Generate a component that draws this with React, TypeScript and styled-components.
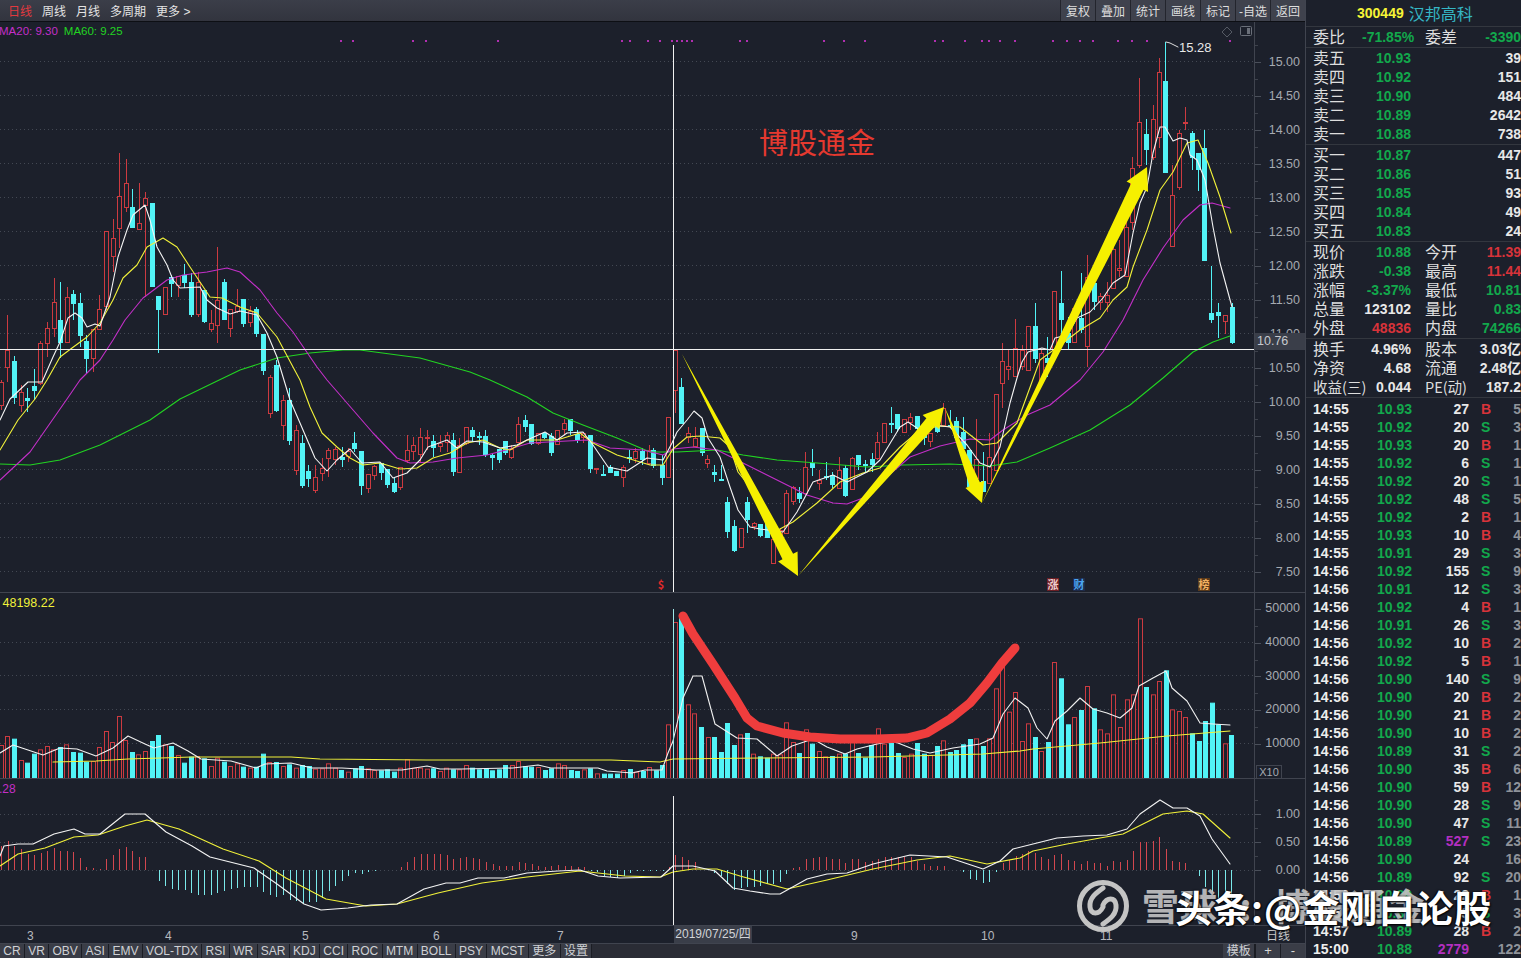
import React from 'react';
import styled, { createGlobalStyle } from 'styled-components';

const BG = '#1c202b';
const RED = '#cc3a40';
const CYAN = '#52f3f6';
const GREEN = '#12a84c';
const GRID = '#434853';

const GlobalStyle = createGlobalStyle`
  html, body {
    margin: 0;
    height: 100%;
    overflow: hidden;
    background: ${BG};
    font-family: "Liberation Sans", "Noto Sans CJK SC", sans-serif;
  }
`;

const Screen = styled.div`
  position: relative;
  width: 1521px;
  height: 958px;
  overflow: hidden;
  display: grid;
  grid-template-columns: 1305px 216px;
  background: ${BG};
`;

const Left = styled.div`
  display: flex;
  flex-direction: column;
  height: 958px;
`;

const Toolbar = styled.div`
  height: 21px;
  flex: none;
  display: flex;
  align-items: center;
  justify-content: space-between;
  padding-left: 3px;
  background: linear-gradient(#3b3e49, #32343e);
  border-bottom: 1px solid #0d0f14;
`;

const ToolGroup = styled.div`
  display: flex;
  height: 100%;
  align-items: center;
`;

const PeriodTab = styled.span<{ $active?: boolean }>`
  padding: 0 5px;
  font-size: 12px;
  white-space: nowrap;
  color: ${(p) => (p.$active ? '#e2393f' : '#e4e4e4')};
`;

const ToolButton = styled.span`
  display: flex;
  align-items: center;
  justify-content: center;
  box-sizing: border-box;
  height: 100%;
  width: 35px;
  font-size: 12px;
  white-space: nowrap;
  color: #dedede;
  border-left: 1px solid #23252d;
  background: #3f424d;
`;

const Pane = styled.div<{ $h: number }>`
  height: ${(p) => p.$h}px;
  flex: none;
  display: grid;
  grid-template-columns: 1254px 51px;
  border-bottom: 1px solid #40444f;
  box-sizing: border-box;
`;

const Plot = styled.div`
  position: relative;
  overflow: hidden;
`;

const ChartSvg = styled.svg`
  display: block;
`;

const Legend = styled.div`
  position: absolute;
  left: -1px;
  top: 3px;
  display: flex;
  gap: 6px;
  white-space: nowrap;
`;

const LegendItem = styled.span<{ $color: string; $size?: number }>`
  color: ${(p) => p.$color};
  font-size: ${(p) => p.$size || 11.5}px;
`;

const PlotTitle = styled.div`
  position: absolute;
  left: 759px;
  top: 100px;
  font-size: 29px;
  line-height: 38px;
  color: #e5392f;
  font-family: "Noto Sans CJK SC", sans-serif;
  white-space: nowrap;
`;

const Marker = styled.span<{ $x: number; $bg?: string; $color: string }>`
  position: absolute;
  left: ${(p) => p.$x}px;
  top: 556px;
  width: 12px;
  height: 13px;
  line-height: 13px;
  font-size: 11px;
  font-weight: 700;
  text-align: center;
  font-family: "Noto Sans CJK SC", sans-serif;
  color: ${(p) => p.$color};
  background: ${(p) => p.$bg || 'transparent'};
`;

const HighLabel = styled.span`
  position: absolute;
  left: 1179px;
  top: 18px;
  font-size: 13px;
  color: #e8e8e8;
`;

const Axis = styled.div<{ $top: number }>`
  position: relative;
  display: flex;
  flex-direction: column;
  margin-top: ${(p) => Math.min(p.$top, 0)}px;
  padding-top: ${(p) => Math.max(p.$top, 0)}px;
  border-left: 1px solid #40444f;
  overflow: hidden;
`;

const AxisLabel = styled.div<{ $row: number }>`
  position: relative;
  flex: none;
  height: ${(p) => p.$row}px;
  line-height: ${(p) => p.$row}px;
  text-align: right;
  padding-right: 5px;
  font-size: 12.5px;
  color: #a6aab1;
  &::before {
    content: '';
    position: absolute;
    left: 0;
    top: 50%;
    width: 6px;
    height: 1px;
    background: #4a4f5a;
  }
  &::after {
    content: '';
    position: absolute;
    left: 0;
    top: 0;
    width: 3px;
    height: 1px;
    background: #3d414b;
  }
`;

const PriceTag = styled.div`
  position: absolute;
  left: 0;
  top: 311px;
  width: 51px;
  height: 17px;
  line-height: 17px;
  padding-left: 2px;
  box-sizing: border-box;
  font-size: 12.5px;
  color: #c6c9ce;
  background: #3a3e49;
`;

const ScaleBox = styled.div`
  position: absolute;
  left: 1px;
  top: 173px;
  width: 24px;
  height: 12px;
  line-height: 12px;
  border: 1px solid #40444f;
  font-size: 11px;
  text-align: center;
  color: #a6aab1;
`;

const DateAxis = styled.div`
  position: relative;
  height: 18px;
  flex: none;
  background: ${BG};
  border-bottom: 1px solid #40444f;
  box-sizing: border-box;
`;

const DateTick = styled.span<{ $x: number }>`
  position: absolute;
  left: ${(p) => p.$x}px;
  top: 3px;
  font-size: 12px;
  color: #b6b9bf;
`;

const DateCursor = styled.span`
  position: absolute;
  left: 674px;
  top: 0;
  width: 78px;
  height: 17px;
  line-height: 17px;
  text-align: center;
  font-size: 12px;
  color: #d2d4d8;
  background: #3a3e49;
`;

const AxisTitle = styled.span`
  position: absolute;
  left: 1266px;
  top: 1px;
  font-size: 12px;
  line-height: 15px;
  font-family: "Noto Sans CJK SC", sans-serif;
  color: #c8c8c8;
`;

const TabBar = styled.div`
  flex: 1;
  display: flex;
  align-items: stretch;
  justify-content: space-between;
  background: #2a2c35;
`;

const TabGroup = styled.div`
  display: flex;
`;

const IndicatorTab = styled.span`
  display: flex;
  align-items: center;
  padding: 0 3.3px;
  font-size: 12px;
  line-height: 14px;
  white-space: nowrap;
  color: #cfd1d5;
  background: #3a3d47;
  border-right: 1px solid #1b1d24;
`;

const StepButton = styled.span`
  display: flex;
  align-items: center;
  justify-content: center;
  width: 24px;
  font-size: 13px;
  line-height: 14px;
  color: #d8d8d8;
  background: #3a3d47;
  border-left: 1px solid #1b1d24;
`;

const Side = styled.div`
  border-left: 1px solid #40444f;
  overflow: hidden;
  font-weight: 700;
  font-size: 14px;
`;

const StockHeader = styled.div`
  height: 27px;
  display: flex;
  align-items: center;
  gap: 5px;
  padding-left: 51px;
  border-bottom: 1px solid #33373f;
  box-sizing: border-box;
`;

const StockCode = styled.span`
  color: #f6f436;
  font-size: 14px;
`;

const StockName = styled.span`
  color: #35b6c4;
  font-size: 16px;
  font-weight: 400;
  font-family: "Noto Sans CJK SC", sans-serif;
`;

const Section = styled.div`
  padding-top: 1px;
  border-bottom: 1px solid #33373f;
`;

const StatRow = styled.div`
  height: 19px;
  line-height: 19px;
  display: grid;
  grid-template-columns: 49px 49px 14px 40px 56px;
  padding-left: 7px;
  white-space: nowrap;
`;

const BookRow = styled.div`
  height: 19px;
  line-height: 19px;
  display: grid;
  grid-template-columns: 49px 49px 1fr;
  padding-left: 7px;
`;

const Label = styled.span<{ $tight?: boolean }>`
  display: block;
  margin-top: -1px;
  font-size: ${(p) => (p.$tight ? 14.5 : 16)}px;
  font-weight: 400;
  color: #dedede;
  white-space: nowrap;
  font-family: "Noto Sans CJK SC", sans-serif;
`;

const Num = styled.span<{ $color?: string }>`
  text-align: right;
  white-space: nowrap;
  color: ${(p) => p.$color || '#e8e8e8'};
`;

const SecondLabel = styled(Label)`
  grid-column: 4;
`;

const TickList = styled.div`
  padding-top: 2px;
`;

const TickRow = styled.div`
  height: 18px;
  line-height: 18px;
  display: grid;
  grid-template-columns: 49px 50px 57px 12px 9px 1fr;
  padding-left: 7px;
  white-space: nowrap;
  color: #eeeeee;
`;

const TradeSide = styled.span<{ $buy: boolean }>`
  text-align: center;
  color: ${(p) => (p.$buy ? '#d8333a' : GREEN)};
`;

const Mark = styled.div`
  position: absolute;
  left: 1076px;
  top: 879px;
  width: 56px;
  height: 56px;
`;

const GrayWater = styled.div`
  position: absolute;
  left: 1142px;
  top: 880px;
  font-size: 37px;
  line-height: 50px;
  letter-spacing: 1px;
  word-spacing: 12px;
  color: #c4c4c4;
  opacity: 0.9;
  white-space: nowrap;
  font-family: "Noto Sans CJK SC", sans-serif;
  font-weight: 700;
`;

const WhiteWater = styled.div`
  position: absolute;
  left: 1175px;
  top: 882px;
  font-size: 37px;
  line-height: 50px;
  letter-spacing: 1px;
  color: #ffffff;
  white-space: nowrap;
  font-family: "Noto Sans CJK SC", sans-serif;
  font-weight: 700;
  text-shadow: 1px 1px 2px #000, -1px 0 2px #000;
`;

type Candle = [number, 'r' | 'c', number, number, number, number];

const candles: Candle[] = [
  [1, 'r', 382, 405, 380, 410], [7, 'r', 350, 367, 315, 382], [14, 'c', 361, 397, 356, 404], [21, 'r', 392, 405, 385, 412],
  [27, 'c', 398, 400, 388, 412], [34, 'c', 386, 390, 369, 400], [40, 'r', 343, 383, 341, 385], [47, 'r', 328, 343, 322, 357],
  [54, 'r', 302, 328, 278, 337], [60, 'c', 320, 342, 282, 358], [67, 'r', 297, 342, 287, 342], [73, 'c', 294, 303, 290, 320],
  [80, 'c', 303, 335, 293, 347], [86, 'c', 341, 358, 335, 373], [93, 'r', 329, 358, 329, 372], [99, 'r', 309, 329, 295, 330],
  [106, 'r', 231, 306, 231, 310], [113, 'r', 238, 256, 219, 272], [119, 'r', 196, 228, 153, 248], [126, 'r', 183, 207, 159, 212],
  [132, 'c', 207, 227, 189, 227], [139, 'r', 223, 229, 183, 229], [145, 'r', 198, 205, 192, 297], [152, 'c', 203, 286, 203, 286],
  [158, 'c', 296, 309, 296, 353], [165, 'r', 287, 314, 287, 314], [171, 'c', 277, 283, 275, 297], [178, 'r', 276, 285, 276, 297],
  [184, 'c', 275, 282, 264, 288], [191, 'c', 282, 314, 273, 317], [198, 'r', 282, 314, 272, 317], [204, 'c', 290, 321, 290, 323],
  [211, 'r', 323, 329, 310, 332], [217, 'r', 300, 325, 247, 343], [224, 'c', 282, 319, 279, 320], [230, 'r', 309, 328, 309, 337],
  [237, 'r', 306, 311, 289, 313], [243, 'c', 299, 323, 299, 327], [250, 'r', 311, 322, 306, 327], [256, 'c', 309, 333, 307, 337],
  [263, 'c', 334, 370, 334, 375], [270, 'r', 377, 413, 375, 418], [276, 'c', 365, 410, 360, 412], [283, 'r', 400, 425, 395, 440],
  [289, 'c', 400, 440, 388, 445], [296, 'r', 430, 470, 425, 475],
  [302, 'c', 443, 485, 435, 488], [308, 'c', 471, 478, 465, 487], [315, 'r', 477, 490, 465, 493], [322, 'r', 468, 473, 458, 481],
  [328, 'r', 450, 458, 448, 477], [335, 'r', 449, 459, 447, 465], [342, 'c', 457, 459, 447, 467], [348, 'r', 451, 456, 448, 462],
  [354, 'c', 443, 448, 432, 452], [361, 'c', 451, 485, 451, 495], [368, 'r', 474, 488, 474, 493], [374, 'r', 466, 475, 465, 480],
  [381, 'c', 463, 472, 463, 480], [387, 'c', 469, 484, 469, 488], [394, 'c', 483, 491, 478, 493], [400, 'r', 467, 487, 467, 490],
  [407, 'r', 450, 460, 435, 463], [413, 'r', 445, 451, 437, 460], [420, 'r', 437, 454, 428, 463], [427, 'r', 437, 438, 430, 450],
  [433, 'c', 441, 447, 435, 457], [440, 'r', 443, 446, 435, 452], [447, 'r', 435, 442, 432, 452], [453, 'c', 440, 471, 433, 476],
  [459, 'r', 445, 472, 438, 472], [466, 'r', 427, 443, 427, 445], [472, 'c', 430, 436, 427, 442], [479, 'c', 436, 437, 432, 445],
  [485, 'c', 436, 454, 430, 457], [492, 'c', 455, 457, 453, 470], [499, 'c', 449, 459, 449, 463], [505, 'c', 441, 452, 441, 455],
  [511, 'r', 449, 457, 445, 459], [518, 'r', 424, 442, 417, 443], [525, 'c', 420, 426, 415, 432], [531, 'c', 424, 443, 424, 445],
  [538, 'r', 433, 443, 433, 445], [544, 'c', 433, 437, 432, 439], [551, 'c', 436, 452, 433, 456], [557, 'r', 430, 444, 430, 445],
  [564, 'r', 423, 429, 419, 435], [570, 'c', 419, 430, 419, 435], [577, 'c', 434, 439, 430, 443], [583, 'r', 433, 437, 432, 443],
  [590, 'c', 435, 468, 435, 473], [596, 'r', 468, 469, 468, 474], [603, 'c', 474, 475, 465, 476], [610, 'c', 467, 472, 465, 473],
  [616, 'c', 471, 475, 471, 476], [623, 'r', 467, 477, 465, 487], [629, 'c', 457, 458, 450, 463], [635, 'r', 451, 458, 448, 463],
  [642, 'c', 451, 459, 448, 465], [649, 'r', 450, 463, 445, 465], [653, 'c', 450, 465, 448, 468], [662, 'c', 465, 477, 455, 485],
  [668, 'r', 417, 477, 417, 478], [675, 'r', 350, 390, 350, 413], [681, 'c', 387, 423, 378, 423], [688, 'r', 433, 437, 427, 443],
  [695, 'r', 438, 446, 427, 447], [702, 'c', 428, 452, 428, 456], [707, 'r', 459, 463, 455, 468], [714, 'c', 472, 474, 465, 482],
  [721, 'c', 479, 480, 465, 481], [727, 'c', 502, 531, 497, 538], [734, 'c', 526, 550, 520, 552], [741, 'r', 528, 547, 528, 548],
  [747, 'c', 502, 519, 497, 533], [754, 'r', 523, 526, 522, 530], [760, 'c', 524, 535, 524, 537], [767, 'c', 522, 537, 522, 538],
  [773, 'r', 539, 563, 539, 564], [780, 'r', 530, 540, 528, 542], [786, 'r', 493, 533, 490, 533], [793, 'r', 487, 501, 486, 505],
  [799, 'c', 493, 498, 487, 503], [805, 'r', 467, 493, 452, 493], [812, 'c', 463, 467, 449, 476], [819, 'r', 480, 483, 470, 490],
  [826, 'c', 476, 477, 462, 480], [832, 'c', 475, 484, 472, 488], [839, 'r', 470, 488, 457, 488], [845, 'c', 468, 495, 465, 497],
  [852, 'r', 458, 489, 457, 490], [858, 'c', 455, 464, 455, 470], [865, 'c', 464, 465, 460, 472], [872, 'c', 459, 464, 453, 472],
  [877, 'r', 442, 458, 432, 460], [884, 'r', 423, 442, 423, 443], [891, 'c', 423, 424, 407, 433], [897, 'c', 414, 428, 414, 432],
  [904, 'r', 419, 432, 419, 433], [910, 'r', 417, 422, 413, 430], [917, 'c', 416, 428, 416, 433], [924, 'c', 428, 437, 428, 445],
  [930, 'r', 433, 441, 433, 447], [937, 'c', 425, 431, 420, 433], [943, 'r', 408, 425, 403, 426], [950, 'c', 425, 426, 410, 427],
  [956, 'c', 421, 437, 417, 443], [963, 'c', 432, 448, 417, 450], [969, 'c', 450, 486, 450, 486], [976, 'r', 459, 478, 419, 478],
  [983, 'c', 481, 491, 452, 491], [989, 'r', 457, 483, 433, 483], [996, 'r', 394, 470, 394, 471], [1002, 'r', 361, 383, 343, 408],
  [1008, 'r', 366, 369, 350, 380], [1015, 'r', 348, 376, 319, 377], [1022, 'r', 350, 366, 345, 370], [1028, 'r', 326, 370, 326, 370],
  [1035, 'c', 326, 358, 303, 363], [1041, 'r', 353, 380, 350, 384], [1047, 'c', 358, 362, 337, 377], [1054, 'r', 291, 350, 291, 352],
  [1061, 'c', 303, 319, 271, 340], [1068, 'c', 333, 342, 317, 350], [1074, 'r', 308, 342, 308, 343], [1081, 'c', 318, 329, 273, 333],
  [1087, 'r', 277, 346, 255, 367], [1094, 'c', 283, 301, 283, 310], [1100, 'r', 296, 302, 293, 310], [1107, 'r', 295, 302, 282, 312],
  [1113, 'r', 249, 288, 233, 288], [1119, 'r', 268, 270, 240, 277], [1126, 'r', 227, 276, 207, 277], [1132, 'r', 168, 222, 157, 230],
  [1139, 'r', 122, 165, 78, 168], [1146, 'c', 134, 149, 119, 165], [1153, 'r', 119, 157, 105, 160], [1159, 'r', 72, 137, 58, 148],
  [1165, 'c', 81, 172, 42, 172], [1172, 'r', 195, 246, 165, 247], [1179, 'r', 133, 187, 130, 190], [1185, 'r', 122, 123, 107, 130],
  [1192, 'c', 133, 157, 131, 170], [1198, 'c', 153, 169, 153, 191], [1204, 'c', 148, 260, 130, 260], [1211, 'c', 313, 319, 266, 323],
  [1218, 'c', 312, 315, 303, 338], [1225, 'r', 315, 321, 315, 334], [1232, 'c', 307, 342, 303, 344],
];

const ma5 = '0,420 10,399 28,382 42,382 53,357 60,342 68,318 75,313 82,318 87,327 95,324 100,326 110,297 118,257 127,230 133,215 145,205 150,220 157,247 167,265 173,280 180,288 200,287 207,300 217,308 230,314 240,311 257,315 267,333 277,357 290,400 300,423 315,458 327,471 337,460 350,449 362,463 380,462 393,478 407,473 420,460 428,447 447,440 457,448 467,441 483,442 500,448 517,445 527,440 545,432 557,440 567,433 583,432 593,445 608,467 627,471 647,458 663,460 672,443 677,432 687,420 694,411 702,418 708,438 720,457 730,487 738,510 750,527 760,529 783,532 797,512 813,482 833,475 847,482 867,472 880,460 900,427 908,422 920,430 933,425 950,427 967,445 980,463 990,467 1000,447 1010,403 1017,378 1022,362 1028,352 1042,348 1050,350 1055,338 1067,335 1077,318 1090,312 1103,298 1113,283 1125,275 1133,233 1140,203 1147,187 1153,153 1160,127 1165,127 1173,141 1180,138 1187,140 1190,155 1197,160 1205,180 1213,227 1220,263 1232,307';
const ma10 = '0,450 18,420 35,399 47,380 60,357 72,348 87,337 100,323 113,300 123,278 137,265 147,247 163,238 177,247 190,267 210,297 222,298 240,307 257,313 277,337 293,367 300,380 310,407 322,433 337,447 350,458 363,465 380,463 400,469 417,468 433,458 450,453 467,443 483,440 500,448 510,450 527,440 557,440 580,433 593,443 617,455 650,465 663,465 673,449 687,437 700,436 720,438 730,447 738,472 750,487 767,517 778,530 793,522 817,503 840,482 863,473 880,468 900,447 920,430 940,426 960,427 983,445 997,443 1017,423 1040,360 1063,343 1080,330 1100,318 1113,300 1127,287 1133,267 1147,230 1160,190 1173,172 1187,143 1198,140 1208,163 1220,197 1231,233';
const ma20 = '0,480 30,452 67,399 80,380 100,360 113,340 125,320 143,298 167,280 183,275 207,272 227,268 240,272 260,290 277,313 293,332 317,367 327,380 347,403 373,433 397,458 410,463 433,462 457,458 487,455 513,448 530,443 567,441 587,440 610,448 643,450 663,455 673,449 693,447 717,450 737,460 763,473 783,483 807,495 833,503 847,504 863,498 883,480 910,457 940,446 970,439 990,440 1003,430 1027,415 1050,405 1080,380 1103,352 1123,320 1143,280 1163,248 1183,220 1200,205 1212,203 1230,208';
const ma60 = '0,464 30,465 60,460 100,445 150,420 180,399 213,383 240,370 277,358 310,353 343,350 360,350 420,358 470,372 490,380 527,397 553,413 583,425 617,438 650,452 677,452 717,450 743,455 777,460 817,463 867,467 903,465 950,464 990,466 1017,462 1050,448 1090,430 1130,405 1163,378 1193,352 1213,342 1230,336';

const volWhite = '0,752 13,744 43,754 60,747 77,748 96,755 113,747 128,735 145,743 154,747 173,742 188,750 201,758 231,760 256,767 265,763 291,762 312,767 342,767 376,769 402,769 427,765 440,768 462,768 513,767 538,764 551,767 598,767 607,770 632,772 645,769 662,769 668,752 673,740 683,697 693,675 702,675 715,723 737,737 757,738 777,755 792,745 813,738 827,746 845,753 857,748 877,743 893,740 913,748 930,752 953,747 980,743 993,737 1003,713 1015,697 1028,707 1037,727 1047,738 1055,720 1067,710 1080,697 1093,708 1107,712 1120,717 1132,707 1139,685 1153,677 1166,670 1172,687 1187,700 1200,722 1213,723 1230,724';
const volYellow = '53,761 96,760 128,758 192,756 291,756 320,758 427,759 611,759 660,761 673,758 760,757 873,756 983,753 1020,750 1033,748 1100,742 1167,735 1230,730';
const macdWhite = '0,855 4,845 18,843 33,843 54,833 74,828 85,833 100,833 125,813 145,813 166,831 192,845 210,856 254,867 277,883 304,903 321,909 348,907 371,904 397,903 424,888 446,882 460,882 478,877 504,877 527,872 558,870 580,869 598,875 620,877 661,876 673,865 693,865 715,870 733,887 750,890 770,893 780,893 807,878 827,873 847,872 873,863 910,854 947,856 983,868 1000,860 1013,848 1037,842 1057,837 1083,835 1107,834 1127,828 1140,813 1160,799 1173,807 1187,807 1200,815 1212,838 1230,863';
const macdYellow = '0,865 18,853 45,847 74,836 98,834 125,825 147,819 179,828 223,848 259,860 286,877 326,898 366,905 397,903 438,892 482,882 527,876 580,870 625,875 660,876 673,871 693,868 717,868 740,875 787,888 827,879 873,868 917,859 950,855 987,863 1020,857 1033,850 1067,843 1100,837 1123,833 1143,823 1163,813 1187,810 1203,813 1230,837';
const redCurve = '683,615 693,633 713,663 735,697 747,717 757,725 783,732 810,736 840,738 877,738 907,737 927,732 950,718 970,702 987,682 1002,662 1015,647';

// volume tops were read off as crop offsets, kind + offset
const volLeft = 'r462 r435 c443 r507 c515 c488 r475 r465 r475 c468 r460 c483 c485 c512 r510 r468 r420 r453 r375 r447 c483 r490 r480 c450 c432 r460 c465 r492 c515 c497 r495 c502 r525 r500 c512 r525 r517 c527 r530 c527 c488 r513 c513 r525 c520 r530 c522 c525 r533 r532 r517 r530 c537 r542 c532 c525 r532 r537 c538 c535 c542 r530 r505 r530 r530 r533 c532 r540 r530 c535 r535 r522 c530 c535 c532 c538 c535 c522 r522 r510 c525 c527 r528 c537 c532 r517 r522 c537 c540 r535 c532 r547 c548 c548 c548 r537 c534 r542 c540 r528 c538';
const volMid = 'c492 r370 r63 c50 r310 r337 c378 r408 c408 c453 c366 c432 r400 c396 r458 c466 c470 r458 r460 r364 r423 c456 r385 c428 r450 r466 c465 r458 c458 r412 c456 c470 c432 r382 r428 c426 c456 r468 r458 c426 c458 r462 c435 r418 c453 c447 c430 c414 r412 c435 r412 r262 r195 r332 r273';
const volRight = 'r420 r367 c408 r450 c423 r183 c232 c370 r348 c327 r255 c322 r385 r397 r280 r378 r295 r280 r52 c258 r280 r240 c208 r325 r330 r348 c397 c420 c360 c305 c370 r427 c402';

const parseBars = (src: string, x0: number, y0: number) =>
  src.split(' ').map((s, i) => ({
    x: x0 + i * 6.55,
    up: s[0] === 'r',
    top: y0 + Number(s.slice(1)) / 3,
  }));

const volumeBars = [
  ...parseBars(volLeft, 0.9, 590),
  ...parseBars(volMid, 661.7, 600),
  ...parseBars(volRight, 1021.7, 600),
];

const macdSegments: [number, number[]][] = [
  [1.3, [24, 29, 24, 21, 16, 15, 17, 19, 22, 19, 19, 18, 12, 3, 2, 1, 11, 15, 21, 23, 19, 13, 13, 0, -11, -16, -19, -20, -20, -23, -25, -25, -25, -23, -21, -19, -18, -17, -17, -17, -22, -25, -27, -25, -30, -31, -34, -32, -32, -28, -21, -16, -11, -6, -3, -4, -2, -1, 0, 0, 0, 3, 8, 13, 16, 16, 16, 16, 15, 11, 12, 13, 12, 11, 8, 6, 4, 4, 4, 8, 7, 6, 4, 3, 4, 5, 4, 4, 3, 3, -1, -2, -6, -7, -8, -6, -3, -1, -1, -1, -1, -1, 3]],
  [675, [15, 13, 10, 8, 0, 0, -3, -6, -14, -20, -18, -17, -17, -16, -14, -14, -12, -4, 2, 3, 11, 12, 13, 13, 11, 11, 7, 11, 11, 8, 9, 11, 13, 13, 13, 13, 13, 9, 6, 4, 4, 4, 0, 0, -2, -9, -10, -13, -12, -2, 7, 10, 14]],
  [1021.7, [16, 19, 17, 13, 11, 15, 16, 10, 9, 6, 9, 7, 7, 4, 9, 8, 10, 19, 28, 28, 29, 33, 21, 9, 8, 7, 0, -6, -17, -22, -30, -30, -30]],
];

const signalDots = [341, 353, 413, 426, 498, 622, 630, 648, 660, 672, 677, 682, 687, 692, 740, 747, 824, 844, 865, 935, 943, 965, 982, 989, 1000, 1015, 1053, 1067, 1080, 1093, 1118, 1132, 1147, 1230];

const priceLabels = ['15.00', '14.50', '14.00', '13.50', '13.00', '12.50', '12.00', '11.50', '11.00', '10.50', '10.00', '9.50', '9.00', '8.50', '8.00', '7.50'];
const volLabels = ['50000', '40000', '30000', '20000', '10000'];
const macdLabels = ['1.00', '0.50', '0.00'];
const dateTicks: [number, string][] = [[27, '3'], [165, '4'], [302, '5'], [433, '6'], [557, '7'], [851, '9'], [981, '10'], [1100, '11']];
const indicators = ['CR', 'VR', 'OBV', 'ASI', 'EMV', 'VOL-TDX', 'RSI', 'WR', 'SAR', 'KDJ', 'CCI', 'ROC', 'MTM', 'BOLL', 'PSY', 'MCST', '更多', '设置'];

const bookAsk = [['卖五', '10.93', '39'], ['卖四', '10.92', '151'], ['卖三', '10.90', '484'], ['卖二', '10.89', '2642'], ['卖一', '10.88', '738']];
const bookBid = [['买一', '10.87', '447'], ['买二', '10.86', '51'], ['买三', '10.85', '93'], ['买四', '10.84', '49'], ['买五', '10.83', '24']];

const ticks: [string, string, string, string, string][] = [
  ['14:55', '10.93', '27', 'B', '5'], ['14:55', '10.92', '20', 'S', '3'], ['14:55', '10.93', '20', 'B', '1'], ['14:55', '10.92', '6', 'S', '1'],
  ['14:55', '10.92', '20', 'S', '1'], ['14:55', '10.92', '48', 'S', '5'], ['14:55', '10.92', '2', 'B', '1'], ['14:55', '10.93', '10', 'B', '4'],
  ['14:55', '10.91', '29', 'S', '3'], ['14:56', '10.92', '155', 'S', '9'], ['14:56', '10.91', '12', 'S', '3'], ['14:56', '10.92', '4', 'B', '1'],
  ['14:56', '10.91', '26', 'S', '3'], ['14:56', '10.92', '10', 'B', '2'], ['14:56', '10.92', '5', 'B', '1'], ['14:56', '10.90', '140', 'S', '9'],
  ['14:56', '10.90', '20', 'B', '2'], ['14:56', '10.90', '21', 'B', '2'], ['14:56', '10.90', '10', 'B', '2'], ['14:56', '10.89', '31', 'S', '2'],
  ['14:56', '10.90', '35', 'B', '6'], ['14:56', '10.90', '59', 'B', '12'], ['14:56', '10.90', '28', 'S', '9'], ['14:56', '10.90', '47', 'S', '11'],
  ['14:56', '10.89', '527', 'S', '23'], ['14:56', '10.90', '24', '', '16'], ['14:56', '10.89', '92', 'S', '20'], ['14:56', '10.89', '22', 'B', '1'],
  ['14:57', '10.88', '8', 'S', '3'], ['14:57', '10.89', '28', 'B', '2'], ['15:00', '10.88', '2779', '', '122'],
];

const arrowPoints = (tail: number[], tip: number[], body: number, head: number, len: number) => {
  const dx = tip[0] - tail[0];
  const dy = tip[1] - tail[1];
  const d = Math.hypot(dx, dy);
  const [ux, uy] = [dx / d, dy / d];
  const bx = tip[0] - ux * len;
  const by = tip[1] - uy * len;
  const at = (w: number) => [`${bx - uy * w},${by + ux * w}`, `${bx + uy * w},${by - ux * w}`];
  const [b1, b2] = at(body / 2);
  const [h1, h2] = at(head / 2);
  return `${tail[0]},${tail[1]} ${b1} ${h1} ${tip[0]},${tip[1]} ${h2} ${b2}`;
};

const arrows = [
  arrowPoints([682, 354], [798, 576], 12, 22, 22),
  arrowPoints([798, 576], [944, 407], 12, 22, 20),
  arrowPoints([945, 408], [982, 503], 11, 20, 20),
  arrowPoints([982, 503], [1147, 167], 14, 24, 22),
];

const Line = ({ points, color, width = 1.1 }: { points: string; color: string; width?: number }) => (
  <polyline points={points} fill="none" stroke={color} strokeWidth={width} strokeLinejoin="round" strokeLinecap="round" />
);

const Grid = ({ rows }: { rows: number[] }) => (
  <>
    {rows.map((y) => (
      <line key={y} x1={0} x2={1254} y1={y + 0.5} y2={y + 0.5} stroke={GRID} strokeDasharray="1 3" />
    ))}
  </>
);

const PriceChart = () => (
  <ChartSvg width={1254} height={570} viewBox="0 22 1254 570">
    <Grid rows={priceLabels.map((_, i) => 61 + i * 34)} />
    {signalDots.map((x) => (
      <rect key={x} x={x - 1} y={40} width={2} height={2} fill="#b02fb0" />
    ))}
    {candles.map(([x, kind, top, bot, wt, wb]) => {
      const cx = Math.round(x);
      const color = kind === 'r' ? RED : CYAN;
      return (
        <g key={x}>
          <line x1={cx + 0.5} x2={cx + 0.5} y1={wt} y2={wb} stroke={color} />
          <rect
            x={cx - 1.5}
            y={top + 0.5}
            width={4}
            height={Math.max(bot - top, 1)}
            fill={kind === 'r' ? BG : CYAN}
            stroke={color}
          />
        </g>
      );
    })}
    <Line points={ma60} color="#22d422" />
    <Line points={ma20} color="#c32fc8" />
    <Line points={ma10} color="#f2f23a" />
    <Line points={ma5} color="#f4f4f4" />
    <Line points="1166,42 1170,43 1178,47" color="#dddddd" width={1} />
    <line x1={673.5} x2={673.5} y1={45} y2={592} stroke="#f0f0f0" />
    <line x1={0} x2={1254} y1={349.5} y2={349.5} stroke="#f0f0f0" />
    {arrows.map((p) => (
      <polygon key={p} points={p} fill="#f6f000" />
    ))}
    <polygon points="1227,27 1232,32 1227,37 1222,32" fill="none" stroke="#555a64" />
    <rect x={1240.5} y={26.5} width={11} height={9} rx={1} fill="none" stroke="#6a6f79" />
    <rect x={1247} y={28} width={3} height={6} fill="#6a6f79" />
  </ChartSvg>
);

const VolumeChart = () => (
  <ChartSvg width={1254} height={185} viewBox="0 592 1254 185">
    <Grid rows={[641, 674, 708, 742]} />
    {volumeBars.map((b) => {
      const cx = Math.round(b.x);
      const color = b.up ? RED : CYAN;
      return (
        <rect
          key={b.x}
          x={cx - 1.5}
          y={b.top + 0.5}
          width={4}
          height={777 - b.top}
          fill={b.up ? BG : CYAN}
          stroke={color}
        />
      );
    })}
    <Line points={volYellow} color="#f2f23a" />
    <Line points={volWhite} color="#f0f0f0" />
    <line x1={673.5} x2={673.5} y1={608} y2={777} stroke="#9fe8e8" />
    <Line points={redCurve} color="#ef3d3d" width={9} />
  </ChartSvg>
);

const MacdChart = () => (
  <ChartSvg width={1254} height={146} viewBox="0 778 1254 146">
    <Grid rows={[813, 841, 869]} />
    {macdSegments.flatMap(([x0, hs]) =>
      hs.map((h, i) => {
        const cx = Math.round(x0 + i * 6.55) + 0.5;
        return (
          <line
            key={`${x0}-${i}`}
            x1={cx}
            x2={cx}
            y1={869}
            y2={869 - h}
            stroke={h > 0 ? '#d2474f' : '#7ae9ea'}
          />
        );
      }),
    )}
    <Line points={macdYellow} color="#f2f23a" />
    <Line points={macdWhite} color="#f4f4f4" />
    <line x1={673.5} x2={673.5} y1={795} y2={924} stroke="#f0f0f0" />
  </ChartSvg>
);

const App: React.FC = () => (
  <Screen>
    <GlobalStyle />
    <Left>
      <Toolbar>
        <ToolGroup>
          <PeriodTab $active>日线</PeriodTab>
          <PeriodTab>周线</PeriodTab>
          <PeriodTab>月线</PeriodTab>
          <PeriodTab>多周期</PeriodTab>
          <PeriodTab>更多 &gt;</PeriodTab>
        </ToolGroup>
        <ToolGroup>
          {['复权', '叠加', '统计', '画线', '标记', '-自选', '返回'].map((t) => (
            <ToolButton key={t}>{t}</ToolButton>
          ))}
        </ToolGroup>
      </Toolbar>

      <Pane $h={571}>
        <Plot>
          <PriceChart />
          <Legend>
            <LegendItem $color="#c32fc8">MA20: 9.30</LegendItem>
            <LegendItem $color="#22d422">MA60: 9.25</LegendItem>
          </Legend>
          <PlotTitle>博股通金</PlotTitle>
          <HighLabel>15.28</HighLabel>
          <Marker $x={655} $color="#e02a2a">$</Marker>
          <Marker $x={1047} $bg="#6b1f25" $color="#f2d0d0">涨</Marker>
          <Marker $x={1073} $bg="#1d2a4a" $color="#4aa4f0">财</Marker>
          <Marker $x={1198} $bg="#5a3a1a" $color="#f0b060">榜</Marker>
        </Plot>
        <Axis $top={23}>
          {priceLabels.map((l) => (
            <AxisLabel key={l} $row={34}>{l}</AxisLabel>
          ))}
          <PriceTag>10.76</PriceTag>
        </Axis>
      </Pane>

      <Pane $h={186}>
        <Plot>
          <VolumeChart />
          <Legend>
            <LegendItem $color="#f2f23a" $size={12.5}>&nbsp;48198.22</LegendItem>
          </Legend>
        </Plot>
        <Axis $top={-1}>
          {volLabels.map((l) => (
            <AxisLabel key={l} $row={33.75}>{l}</AxisLabel>
          ))}
          <ScaleBox>X10</ScaleBox>
        </Axis>
      </Pane>

      <Pane $h={147}>
        <Plot>
          <MacdChart />
          <Legend>
            <LegendItem $color="#c32fc8" $size={12}>.28</LegendItem>
          </Legend>
        </Plot>
        <Axis $top={21}>
          {macdLabels.map((l) => (
            <AxisLabel key={l} $row={28}>{l}</AxisLabel>
          ))}
        </Axis>
      </Pane>

      <DateAxis>
        {dateTicks.map(([x, t]) => (
          <DateTick key={t} $x={x}>{t}</DateTick>
        ))}
        <DateCursor>2019/07/25/四</DateCursor>
        <AxisTitle>日线</AxisTitle>
      </DateAxis>

      <TabBar>
        <TabGroup>
          {indicators.map((t) => (
            <IndicatorTab key={t}>{t}</IndicatorTab>
          ))}
        </TabGroup>
        <TabGroup>
          <IndicatorTab>模板</IndicatorTab>
          <StepButton>+</StepButton>
          <StepButton>-</StepButton>
        </TabGroup>
      </TabBar>
    </Left>

    <Side>
      <StockHeader>
        <StockCode>300449</StockCode>
        <StockName>汉邦高科</StockName>
      </StockHeader>
      <Section>
        <StatRow>
          <Label>委比</Label>
          <Num $color={GREEN}>-71.85%</Num>
          <SecondLabel>委差</SecondLabel>
          <Num $color={GREEN}>-3390</Num>
        </StatRow>
      </Section>
      {[bookAsk, bookBid].map((book) => (
        <Section key={book[0][0]}>
          {book.map(([name, price, vol]) => (
            <BookRow key={name}>
              <Label>{name}</Label>
              <Num $color={GREEN}>{price}</Num>
              <Num>{vol}</Num>
            </BookRow>
          ))}
        </Section>
      ))}
      <Section>
        <StatRow><Label>现价</Label><Num $color={GREEN}>10.88</Num><SecondLabel>今开</SecondLabel><Num $color="#d8333a">11.39</Num></StatRow>
        <StatRow><Label>涨跌</Label><Num $color={GREEN}>-0.38</Num><SecondLabel>最高</SecondLabel><Num $color="#d8333a">11.44</Num></StatRow>
        <StatRow><Label>涨幅</Label><Num $color={GREEN}>-3.37%</Num><SecondLabel>最低</SecondLabel><Num $color={GREEN}>10.81</Num></StatRow>
        <StatRow><Label>总量</Label><Num>123102</Num><SecondLabel>量比</SecondLabel><Num $color={GREEN}>0.83</Num></StatRow>
        <StatRow><Label>外盘</Label><Num $color="#d8333a">48836</Num><SecondLabel>内盘</SecondLabel><Num $color={GREEN}>74266</Num></StatRow>
      </Section>
      <Section>
        <StatRow><Label>换手</Label><Num>4.96%</Num><SecondLabel>股本</SecondLabel><Num>3.03亿</Num></StatRow>
        <StatRow><Label>净资</Label><Num>4.68</Num><SecondLabel>流通</SecondLabel><Num>2.48亿</Num></StatRow>
        <StatRow><Label $tight>收益(三)</Label><Num>0.044</Num><SecondLabel $tight>PE(动)</SecondLabel><Num>187.2</Num></StatRow>
      </Section>
      <TickList>
        {ticks.map(([time, price, vol, side, count], i) => (
          <TickRow key={i}>
            <span>{time}</span>
            <Num $color={GREEN}>{price}</Num>
            <Num $color={Number(vol) > 500 ? '#b32fc0' : undefined}>{vol}</Num>
            <span />
            <TradeSide $buy={side === 'B'}>{side}</TradeSide>
            <Num $color="#8f939a">{count}</Num>
          </TickRow>
        ))}
      </TickList>
    </Side>

    <Mark>
      <svg width="56" height="56" viewBox="0 0 56 56" fill="none" stroke="#c4c4c4" strokeWidth="5" strokeLinecap="round">
        <circle cx="27" cy="27" r="23.5" />
        <path d="M27 9 C20 14 13 19 14 28 C15 36 23 36 27 28" />
        <path d="M27 45 C34 40 41 35 40 26 C39 18 31 18 27 26" />
      </svg>
    </Mark>
    <GrayWater>雪球 : 博股通金</GrayWater>
    <WhiteWater>头条:@金刚白论股</WhiteWater>
  </Screen>
);

export default App;
